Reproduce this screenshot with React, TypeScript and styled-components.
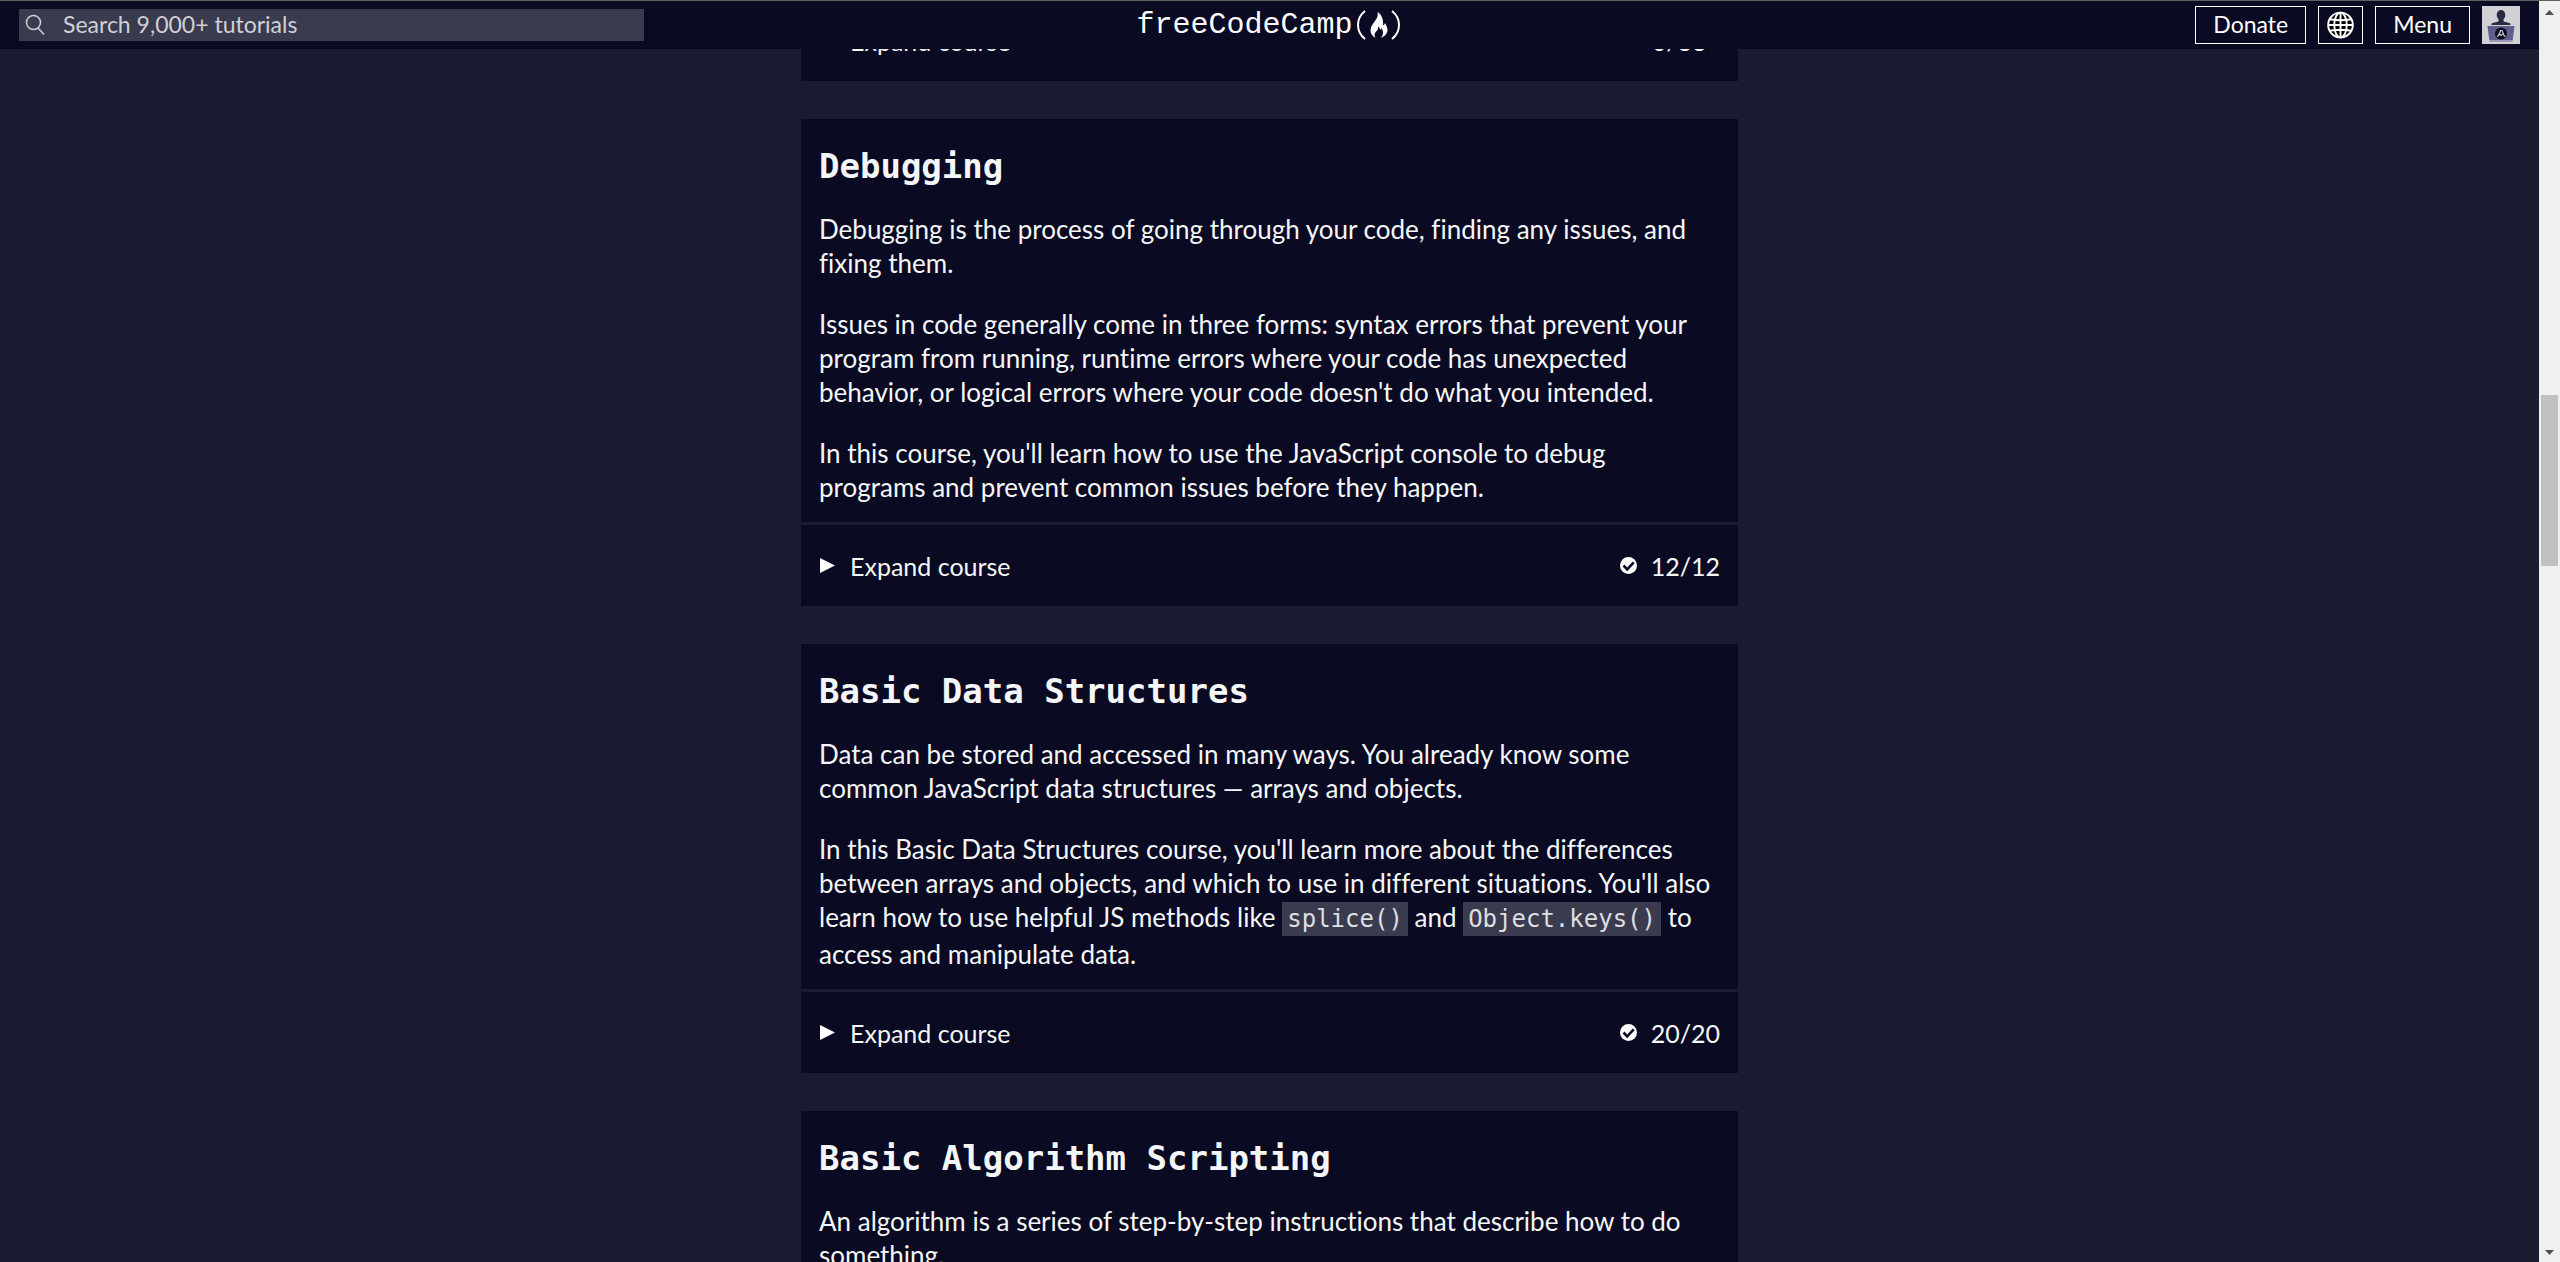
import React from "react";
import styled, { createGlobalStyle } from "styled-components";

const sans = `Lato, "Liberation Sans", sans-serif`;
const mono = `"DejaVu Sans Mono", "Liberation Mono", monospace`;

const GlobalStyle = createGlobalStyle`
  *, *::before, *::after { box-sizing: border-box; }
  body {
    margin: 0;
    overflow: hidden;
    background: #1b1b32;
    color: #f5f6f7;
    font: 26px/34px ${sans};
    font-variant-ligatures: no-common-ligatures;
  }
  button, input { font: inherit; color: inherit; }
`;

const Shell = styled.div`
  display: grid;
  grid-template-columns: minmax(0, 1fr) 21px;
  height: 100vh;
  overflow: hidden;
`;

const Page = styled.div`
  min-width: 0;
  overflow: hidden;
`;

const Header = styled.header`
  position: fixed;
  z-index: 2;
  top: 0;
  left: 0;
  right: 21px;
  display: grid;
  grid-template-columns: 1fr auto 1fr;
  align-items: center;
  height: 49px;
  padding: 1px 19px 0;
  background: #0a0a23;
`;

const TopEdge = styled.div`
  position: fixed;
  z-index: 3;
  top: 0;
  left: 0;
  right: 0;
  height: 1px;
  background: #5f625f;
`;

const SearchForm = styled.form`
  display: flex;
  align-items: center;
  width: 56%;
  max-width: 625px;
  height: 32px;
  padding-left: 6px;
  background: #3b3b4f;
  color: #d0d0d5;
`;

const SearchLabel = styled.label`
  display: flex;
`;

const SearchInput = styled.input`
  flex: 1;
  min-width: 0;
  height: 32px;
  padding: 0 0 2px 18px;
  border: 0;
  outline: 0;
  background: transparent;
  font-size: 23px;
  &::placeholder { color: #d0d0d5; opacity: 1; }
`;

const Logo = styled.a`
  display: flex;
  align-items: center;
  height: 44px;
  color: #fff;
  font: 30px/44px "Liberation Mono", monospace;
  text-decoration: none;
`;

const Nav = styled.nav`
  display: flex;
  justify-content: flex-end;
  align-items: center;
  gap: 12px;
`;

const NavButton = styled.button<{ $icon?: boolean }>`
  display: flex;
  align-items: center;
  justify-content: center;
  height: 38px;
  padding: ${(p) => (p.$icon ? "0 8px" : "0 17px 2px")};
  border: 1px solid #fff;
  background: #0a0a23;
  color: #fff;
  font-size: 23px;
  line-height: 34px;
`;

const Avatar = styled.a`
  display: flex;
  width: 38px;
  height: 38px;
  background: #d0d0d5;
`;

const Courses = styled.main`
  display: flex;
  flex-direction: column;
  gap: 38px;
  width: 100%;
  max-width: 937px;
  margin: 0 auto;
`;

const Card = styled.section`
  background: #0a0a23;
`;

const Description = styled.div`
  padding: 28px 22px 18px 18px;
  border-bottom: 3px solid #1b1b32;
`;

const Title = styled.h3`
  margin: 0 0 26px;
  font: bold 34px/39px ${mono};
`;

const Text = styled.p`
  margin: 0;
  & + & { margin-top: 27px; }
`;

const Code = styled.code`
  padding: 3px 5px;
  background: #3b3b4f;
  color: #dfdfe2;
  font: 24px/35px ${mono};
`;

const Expand = styled.button`
  display: flex;
  align-items: center;
  width: 100%;
  height: 81px;
  padding: 0 18px;
  border: 0;
  background: transparent;
  text-align: left;
  font-size: 25px;
`;

const ExpandLabel = styled.span`
  flex: 1;
  padding: 1px 0 0 15px;
`;

const Count = styled.span`
  min-width: 82px;
  padding: 1px 0 0 14px;
`;

const Scrollbar = styled.div`
  display: flex;
  flex-direction: column;
  align-items: center;
  justify-content: space-between;
  padding: 10px 0 7px;
  background: #f0f0f0;
`;

const Track = styled.div`
  flex: 1;
  display: flex;
  flex-direction: column;
  width: 17px;
`;

const Before = styled.div`
  flex: 380;
`;
const Thumb = styled.div`
  flex: 171;
  background: #c1c1c1;
`;
const After = styled.div`
  flex: 683;
`;

const SearchIcon = () => (
  <svg width="20" height="22" viewBox="0 0 20 22" fill="none" stroke="#d0d0d5" strokeWidth="1.5" aria-hidden="true">
    <circle cx="8.5" cy="8.5" r="7" />
    <path d="M13 14l6 6.500" />
  </svg>
);

const LogoMark = () => (
  <svg width="50" height="36" viewBox="0 0 50 36" fill="none" aria-hidden="true">
    <path d="M12 4C7 8 5 12.500 5 18s2 10 7 14" stroke="#fff" strokeWidth="2" />
    <path d="M39 4c5 4 7 8.500 7 14s-2 10-7 14" stroke="#fff" strokeWidth="2" />
    <path
      fill="#fff"
      d="M24.500 5c.8 3.500-.2 6-2.500 9-2.200 3-4.500 5.500-4.500 9.500 0 3.500 2 5.500 5 7.500-1.500-2.500-1.300-4.500.7-6.500 1.600-1.600 2.200-3 1.800-5 1.500.8 2.200 2 2 3.500.8-.4 1.200-1.200 1.200-2.200 2.300 3.500 2.800 7-.7 10.200 4.500-1.500 7-4.500 7-8.200 0-2.800-1.500-4.300-2.500-6.800-.4 1.300-1 2-2 2.300C30.700 12.500 28.500 7.500 24.500 5z"
    />
  </svg>
);

const GlobeIcon = () => (
  <svg width="27" height="28" viewBox="0 0 28 28" fill="none" stroke="#fff" strokeWidth="2" aria-hidden="true">
    <circle cx="14" cy="14" r="12.800" fill="#000" />
    <ellipse cx="14" cy="14" rx="6.500" ry="12.800" />
    <path d="M14 1v26M1 14h26M3 8q11 2 22 0M3 20q11-2 22 0" />
  </svg>
);

const AvatarIcon = () => (
  <svg width="38" height="38" viewBox="0 0 38 38" aria-hidden="true">
    <ellipse cx="19" cy="9" rx="4.300" ry="5" fill="#2a2a40" />
    <path d="M16.500 12h5v3.500l6 1.500q1.500.5 1 2h-19q-.5-1.500 1-2l6-1.500z" fill="#2a2a40" />
    <path d="M5.500 20h27l-1.800 14H7.300z" fill="#5f5f8c" />
    <path d="M7.500 34h23v2h-23z" fill="#9a9ab8" />
    <circle cx="19" cy="27.500" r="6" fill="#0a0a23" />
    <path d="M15 30.500l1.500-1 2-5h1.500l2 5 1.500 1M17.500 28l1.500 1.500 1.500-1.500" fill="none" stroke="#d0d0d5" strokeWidth="1.200" />
  </svg>
);

const Caret = () => (
  <svg width="16" height="16" viewBox="0 0 16 16" fill="#fff" aria-hidden="true">
    <path d="M1 0l15 7.500L1 15z" />
  </svg>
);

const CheckIcon = () => (
  <svg width="17" height="17" viewBox="0 0 17 17" aria-hidden="true">
    <circle cx="8.500" cy="8.500" r="8.500" fill="#fff" />
    <path d="M3.500 8.500l3.700 3.800 6.500-7" fill="none" stroke="#0a0a23" strokeWidth="2.600" />
  </svg>
);

const OpenIcon = () => (
  <svg width="17" height="17" viewBox="0 0 17 17" aria-hidden="true">
    <circle cx="8.500" cy="8.500" r="7.800" fill="none" stroke="#fff" strokeWidth="1.200" />
  </svg>
);

const ScrollArrow = ({ down }: { down?: boolean }) => (
  <svg width="9" height="5" viewBox="0 0 9 5" fill="#505050" aria-hidden="true">
    <path d={down ? "M0 0h9L4.500 5z" : "M0 5h9L4.500 0z"} />
  </svg>
);

function ExpandRow({ done, total }: { done: number; total: number }) {
  return (
    <Expand type="button" aria-expanded="false">
      <Caret />
      <ExpandLabel>Expand course</ExpandLabel>
      {done === total ? <CheckIcon /> : <OpenIcon />}
      <Count>{`${done}/${total}`}</Count>
    </Expand>
  );
}

type CourseProps = { title: string; done: number; total: number; children: React.ReactNode };

function Course({ title, done, total, children }: CourseProps) {
  return (
    <Card>
      <Description>
        <Title>{title}</Title>
        {children}
      </Description>
      <ExpandRow done={done} total={total} />
    </Card>
  );
}

export default function App() {
  return (
    <>
      <GlobalStyle />
      <TopEdge />
      <Shell>
        <Page>
          <Header>
            <SearchForm role="search">
              <SearchLabel htmlFor="search" aria-label="Search">
                <SearchIcon />
              </SearchLabel>
              <SearchInput id="search" type="text" placeholder="Search 9,000+ tutorials" />
            </SearchForm>
            <Logo href="#">
              freeCodeCamp
              <LogoMark />
            </Logo>
            <Nav>
              <NavButton type="button">Donate</NavButton>
              <NavButton type="button" $icon aria-label="Language">
                <GlobeIcon />
              </NavButton>
              <NavButton type="button">Menu</NavButton>
              <Avatar href="#" aria-label="Profile">
                <AvatarIcon />
              </Avatar>
            </Nav>
          </Header>
          <Courses>
            <Card>
              <ExpandRow done={0} total={33} />
            </Card>
            <Course title="Debugging" done={12} total={12}>
              <Text>
                Debugging is the process of going through your code, finding any issues, and fixing them.
              </Text>
              <Text>
                Issues in code generally come in three forms: syntax errors that prevent your program from
                running, runtime errors where your code has unexpected behavior, or logical errors where your
                code doesn't do what you intended.
              </Text>
              <Text>
                In this course, you'll learn how to use the JavaScript console to debug programs and prevent
                common issues before they happen.
              </Text>
            </Course>
            <Course title="Basic Data Structures" done={20} total={20}>
              <Text>
                Data can be stored and accessed in many ways. You already know some common JavaScript data
                structures — arrays and objects.
              </Text>
              <Text>
                In this Basic Data Structures course, you'll learn more about the differences between arrays
                and objects, and which to use in different situations. You'll also learn how to use helpful JS
                methods like <Code>splice()</Code> and <Code>Object.keys()</Code> to access and manipulate
                data.
              </Text>
            </Course>
            <Course title="Basic Algorithm Scripting" done={0} total={21}>
              <Text>
                An algorithm is a series of step-by-step instructions that describe how to do something.
              </Text>
            </Course>
          </Courses>
        </Page>
        <Scrollbar aria-hidden="true">
          <ScrollArrow />
          <Track>
            <Before />
            <Thumb />
            <After />
          </Track>
          <ScrollArrow down />
        </Scrollbar>
      </Shell>
    </>
  );
}
